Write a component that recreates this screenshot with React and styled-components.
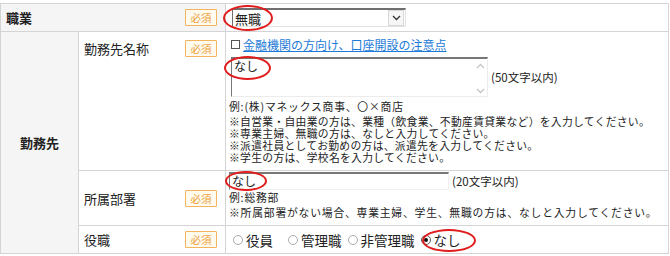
import styled, { createGlobalStyle } from "styled-components";

const GlobalStyle = createGlobalStyle`
  body {
    margin: 0;
    padding-top: 3px;
    background: #fff;
    font-family: "Noto Sans CJK JP", "Noto Sans", sans-serif;
    color: #222;
  }
`;

const Table = styled.table`
  border-collapse: collapse;
  width: 669px;
  table-layout: fixed;
`;

const Head = styled.th`
  border: 1px solid #d4d4d4;
  background: ${(p) => (p.$gray ? "#f5f5f5" : "#fff")};
  font-weight: ${(p) => (p.$bold ? "bold" : "normal")};
  font-size: 13px;
  text-align: left;
  vertical-align: ${(p) => (p.$top ? "top" : "middle")};
  padding: ${(p) => (p.$top ? "7px 8px 0 5px" : "0 8px 0 5px")};
  height: ${(p) => p.$h}px;
  box-sizing: border-box;
`;

const CenterHead = styled(Head)`
  text-align: center;
  padding: 0;
`;

const LabelRow = styled.div`
  display: flex;
  align-items: center;
  justify-content: space-between;
`;

const Badge = styled.span`
  display: inline-flex;
  align-items: center;
  justify-content: center;
  width: 30px;
  height: 15px;
  border: 1px solid #f2b45e;
  background: #fffbef;
  color: #eda03c;
  font-size: 10.5px;
  font-weight: normal;
  border-radius: 1px;
`;

const Cell = styled.td`
  border: 1px solid #d4d4d4;
  padding: ${(p) => p.$pad || "0 0 0 5px"};
  vertical-align: ${(p) => (p.$top ? "top" : "middle")};
  height: ${(p) => p.$h}px;
  box-sizing: border-box;
  font-size: 11px;
  position: relative;
`;

const Select = styled.div`
  position: relative;
  width: 174px;
  height: 19px;
  margin-left: 1px;
  border-top: 2px solid #6f6f6f;
  border-left: 1px solid #6f6f6f;
  border-right: 1px solid #e2e2e2;
  border-bottom: 1px solid #e2e2e2;
  display: flex;
  align-items: center;
  justify-content: space-between;
  font-size: 13px;
  padding-left: 2px;
  box-sizing: border-box;
`;

const SelectButton = styled.span`
  width: 16px;
  height: 16px;
  border: 1px solid #d8d8d8;
  background: #f6f6f6;
  display: flex;
  align-items: center;
  justify-content: center;
  box-sizing: border-box;
  margin-right: 1px;
`;

const Link = styled.a`
  display: flex;
  align-items: center;
  gap: 3px;
  color: #1d7ad8;
  text-decoration: underline;
  font-size: 12px;
  line-height: 15px;
  margin-left: 2px;
`;

const Square = styled.span`
  width: 7px;
  height: 7px;
  border: 1px solid #555;
  display: inline-block;
`;

const FieldRow = styled.div`
  display: flex;
  align-items: center;
  margin-top: ${(p) => p.$mt || 0}px;
`;

const TextArea = styled.div`
  position: relative;
  width: 257px;
  height: 40px;
  margin-left: 2px;
  border-top: 2px solid #777;
  border-left: 1px solid #777;
  border-right: 1px solid #ececec;
  border-bottom: 1px solid #ececec;
  box-sizing: border-box;
  font-size: 12px;
  line-height: 14px;
  padding: 0 2px;
`;

const Scroll = styled.span`
  position: absolute;
  right: 1px;
  top: 4px;
  bottom: 2px;
  width: 11px;
  display: flex;
  flex-direction: column;
  justify-content: space-between;
  align-items: center;
`;

const Input = styled.div`
  width: 220px;
  height: 18px;
  border-top: 2px solid #777;
  border-left: 1px solid #777;
  border-right: 1px solid #f0f0f0;
  border-bottom: 1px solid #f0f0f0;
  box-sizing: border-box;
  font-size: 12px;
  line-height: 14px;
  padding-left: 2px;
`;

const Hint = styled.span`
  font-size: 11.5px;
  margin-left: 3px;
`;

const Line = styled.div`
  font-size: 10.8px;
  line-height: ${(p) => p.$lh || 12}px;
  letter-spacing: ${(p) => p.$ls || 0.3}px;
  margin-top: ${(p) => p.$mt || 0}px;
  white-space: nowrap;
`;

const Mark = styled.span`
  position: absolute;
  border: 2px solid #e01c1c;
  border-radius: 50%;
  pointer-events: none;
`;

const Radios = styled.div`
  display: flex;
  align-items: center;
  font-size: 13.5px;
  margin-left: 2px;
`;

const RadioItem = styled.label`
  display: flex;
  align-items: center;
  gap: 3px;
  margin-right: ${(p) => p.$mr}px;
`;

const Dot = styled.span`
  width: 10px;
  height: 10px;
  border-radius: 50%;
  border: 1px solid ${(p) => (p.$on ? "#555" : "#aaa")};
  box-sizing: border-box;
  display: flex;
  align-items: center;
  justify-content: center;
  &::after {
    content: "";
    width: 4px;
    height: 4px;
    border-radius: 50%;
    background: ${(p) => (p.$on ? "#111" : "transparent")};
  }
`;

const Chevron = ({ up, color = "#333" }) => (
  <svg width="9" height="6" viewBox="0 0 9 6">
    <path
      d={up ? "M1 5 L4.5 1.5 L8 5" : "M1 1 L4.5 4.5 L8 1"}
      fill="none"
      stroke={color}
      strokeWidth="1.3"
    />
  </svg>
);

const App = () => {
  const radios = [
    { text: "役員", mr: 15 },
    { text: "管理職", mr: 6 },
    { text: "非管理職", mr: 6 },
    { text: "なし", mr: 0, on: true },
  ];

  return (
    <>
      <GlobalStyle />
      <Table>
        <colgroup>
          <col style={{ width: 78 }} />
          <col style={{ width: 147 }} />
          <col />
        </colgroup>
        <tbody>
          <tr>
            <Head colSpan={2} $gray $bold $h={28}>
              <LabelRow>
                職業
                <Badge>必須</Badge>
              </LabelRow>
            </Head>
            <Cell $h={28}>
              <Select>
                無職
                <SelectButton>
                  <Chevron />
                </SelectButton>
              </Select>
              <Mark style={{ left: -3, top: 1, width: 46, height: 22 }} />
            </Cell>
          </tr>
          <tr>
            <CenterHead rowSpan={3} $gray $bold>
              勤務先
            </CenterHead>
            <Head $top $h={139}>
              <LabelRow>
                勤務先名称
                <Badge>必須</Badge>
              </LabelRow>
            </Head>
            <Cell $top $h={139} $pad="5px 0 0 3px">
              <Link href="#">
                <Square />
                金融機関の方向け、口座開設の注意点
              </Link>
              <FieldRow $mt={5}>
                <TextArea>
                  なし
                  <Scroll>
                    <Chevron up color="#c4c4c4" />
                    <Chevron color="#c4c4c4" />
                  </Scroll>
                </TextArea>
                <Hint>(50文字以内)</Hint>
              </FieldRow>
              <Mark style={{ left: -2, top: 24, width: 43, height: 20 }} />
              <Line $mt={3} $lh={13} $ls={0.8}>例:(株)マネックス商事、〇×商店</Line>
              <Line $mt={2}>※自営業・自由業の方は、業種（飲食業、不動産賃貸業など）を入力してください。</Line>
              <Line>※専業主婦、無職の方は、なしと入力してください。</Line>
              <Line>※派遣社員としてお勤めの方は、派遣先を入力してください。</Line>
              <Line>※学生の方は、学校名を入力してください。</Line>
            </Cell>
          </tr>
          <tr>
            <Head $h={55}>
              <LabelRow>
                所属部署
                <Badge>必須</Badge>
              </LabelRow>
            </Head>
            <Cell $top $h={55} $pad="1px 0 0 3px">
              <FieldRow>
                <Input>なし</Input>
                <Hint>(20文字以内)</Hint>
              </FieldRow>
              <Mark style={{ left: -1, top: 0, width: 38, height: 16 }} />
              <Line $mt={1} $lh={13} $ls={0.8}>例:総務部</Line>
              <Line $mt={2} $lh={13} $ls={0.8}>※所属部署がない場合、専業主婦、学生、無職の方は、なしと入力してください。</Line>
            </Cell>
          </tr>
          <tr>
            <Head $h={28}>
              <LabelRow>
                役職
                <Badge>必須</Badge>
              </LabelRow>
            </Head>
            <Cell $h={28} $pad="0 0 0 5px">
              <Radios>
                {radios.map((r) => (
                  <RadioItem key={r.text} $mr={r.mr}>
                    <Dot $on={r.on} />
                    {r.text}
                  </RadioItem>
                ))}
              </Radios>
              <Mark style={{ left: 196, top: 3, width: 50, height: 19 }} />
            </Cell>
          </tr>
        </tbody>
      </Table>
    </>
  );
};

export default App;
